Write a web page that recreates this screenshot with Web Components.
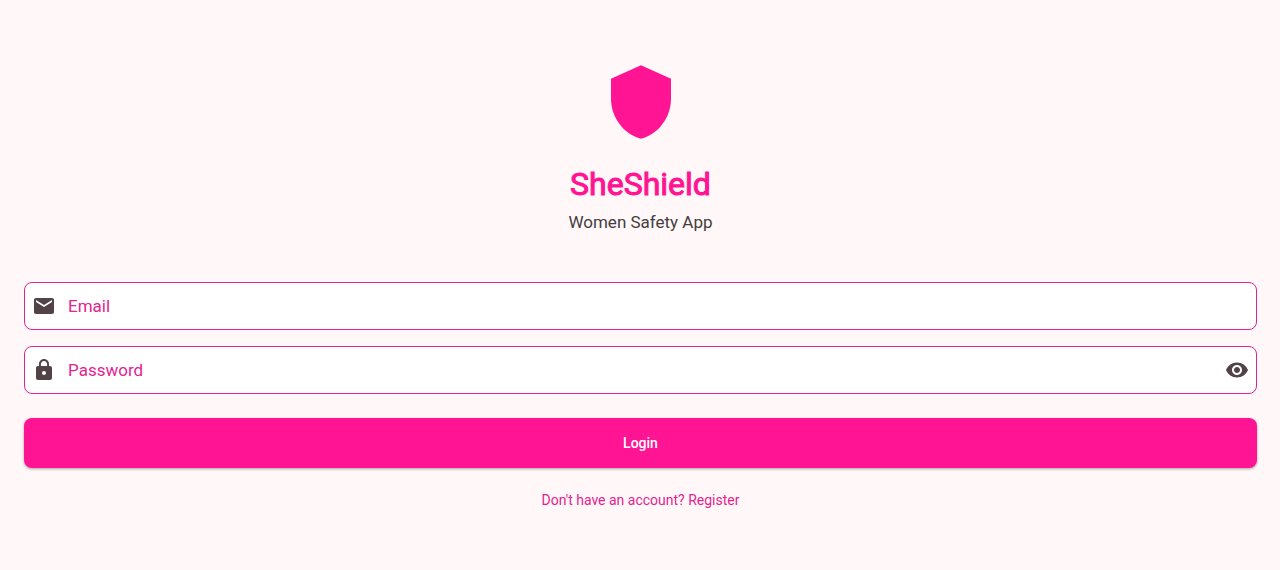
<!DOCTYPE html>
<html lang="en">
<head>
<meta charset="utf-8">
<meta name="viewport" content="width=device-width, initial-scale=1">
<title>SheShield</title>
<style>
  body { margin: 0; background: #fff7f8; font-family: Roboto, sans-serif; }
</style>
</head>
<body>
<login-page></login-page>

<script>
class BrandHeader extends HTMLElement {
  constructor() {
    super();
    this.attachShadow({ mode: 'open' }).innerHTML = `
      <style>
        :host { display: flex; flex-direction: column; align-items: center; text-align: center; }
        svg { width: 80px; height: 80px; fill: #ff1493; }
        h1 { margin: 22px 0 0; font-size: 32px; line-height: 40px; font-weight: 400; color: #ff1493; -webkit-text-stroke: 1px #ff1493; }
        p { margin: 6px 0 0; font-size: 17px; line-height: 24px; color: #443e40; }
      </style>
      <svg viewBox="0 0 24 24" aria-hidden="true"><path d="M12 1 3 5v6c0 5.55 3.84 10.74 9 12 5.16-1.26 9-6.45 9-12V5l-9-4z"/></svg>
      <h1><slot name="title"></slot></h1>
      <p><slot></slot></p>`;
  }
}

const ICONS = {
  mail: 'M20 4H4c-1.1 0-1.99.9-1.99 2L2 18c0 1.1.9 2 2 2h16c1.1 0 2-.9 2-2V6c0-1.1-.9-2-2-2zm0 4-8 5-8-5V6l8 5 8-5v2z',
  lock: 'M18 8h-1V6c0-2.76-2.24-5-5-5S7 3.24 7 6v2H6c-1.1 0-2 .9-2 2v10c0 1.1.9 2 2 2h12c1.1 0 2-.9 2-2V10c0-1.1-.9-2-2-2zm-6 9c-1.1 0-2-.9-2-2s.9-2 2-2 2 .9 2 2-.9 2-2 2zm3.1-9H8.9V6c0-1.71 1.39-3.1 3.1-3.1s3.1 1.39 3.1 3.1v2z',
  eye: 'M12 4.5C7 4.5 2.73 7.61 1 12c1.73 4.39 6 7.5 11 7.5s9.27-3.11 11-7.5c-1.73-4.39-6-7.5-11-7.5zM12 17c-2.76 0-5-2.24-5-5s2.24-5 5-5 5 2.24 5 5-2.24 5-5 5zm0-8c-1.66 0-3 1.34-3 3s1.34 3 3 3 3-1.34 3-3-1.34-3-3-3z'
};

class TextField extends HTMLElement {
  constructor() {
    super();
    const type = this.getAttribute('type') || 'text';
    const reveal = type === 'password'
      ? `<button type="button" aria-label="Show password"><svg viewBox="0 0 24 24"><path d="${ICONS.eye}"/></svg></button>` : '';
    this.attachShadow({ mode: 'open' }).innerHTML = `
      <style>
        :host { display: block; }
        .box { display: flex; align-items: center; box-sizing: border-box; height: 48px; padding: 0 7px; border: 1px solid #dd2590; border-radius: 8px; background: #fff; }
        svg { display: block; flex: none; width: 24px; height: 24px; fill: #524347; }
        .entry { display: grid; flex: 1; align-items: center; margin-left: 12px; font-size: 17px; line-height: 24px; }
        label, input { grid-area: 1 / 1; }
        label { color: #e3248f; pointer-events: none; }
        input { width: 100%; box-sizing: border-box; padding: 0; border: 0; outline: 0; background: none; font: inherit; color: #22191c; }
        input:focus + label, input:not(:placeholder-shown) + label { visibility: hidden; }
        button { padding: 0; border: 0; background: none; cursor: pointer; }
      </style>
      <div class="box">
        <svg viewBox="0 0 24 24" aria-hidden="true"><path d="${ICONS[this.getAttribute('icon')]}"/></svg>
        <div class="entry"><input id="field" type="${type}" placeholder=" "><label for="field">${this.getAttribute('label')}</label></div>
        ${reveal}
      </div>`;
    const button = this.shadowRoot.querySelector('button');
    if (button) button.addEventListener('click', () => {
      const input = this.shadowRoot.querySelector('input');
      input.type = input.type === 'password' ? 'text' : 'password';
    });
  }
}

class PrimaryButton extends HTMLElement {
  constructor() {
    super();
    this.attachShadow({ mode: 'open' }).innerHTML = `
      <style>
        :host { display: block; }
        button { display: block; width: 100%; height: 50px; padding: 0; border: 0; border-radius: 8px; background: #ff1493; color: #fff; font: 500 14px/20px Roboto, sans-serif; box-shadow: 0 1px 3px rgba(0, 0, 0, .35); cursor: pointer; }
      </style>
      <button type="button"><slot></slot></button>`;
  }
}

class LoginPage extends HTMLElement {
  constructor() {
    super();
    this.attachShadow({ mode: 'open' }).innerHTML = `
      <style>
        :host { display: flex; flex-direction: column; justify-content: center; box-sizing: border-box; min-height: 100vh; padding: 24px 23px 22px 24px; }
        form { display: flex; flex-direction: column; margin-top: 48px; }
        text-field + text-field { margin-top: 16px; }
        primary-button { margin-top: 24px; }
        a { align-self: center; margin-top: 22px; font-size: 14px; line-height: 20px; color: #e3248f; text-decoration: none; }
      </style>
      <brand-header><span slot="title">SheShield</span>Women Safety App</brand-header>
      <form>
        <text-field icon="mail" type="email" label="Email"></text-field>
        <text-field icon="lock" type="password" label="Password"></text-field>
        <primary-button>Login</primary-button>
        <a href="#register">Don't have an account? Register</a>
      </form>`;
  }
}

customElements.define('brand-header', BrandHeader);
customElements.define('text-field', TextField);
customElements.define('primary-button', PrimaryButton);
customElements.define('login-page', LoginPage);
</script>
</body>
</html>
